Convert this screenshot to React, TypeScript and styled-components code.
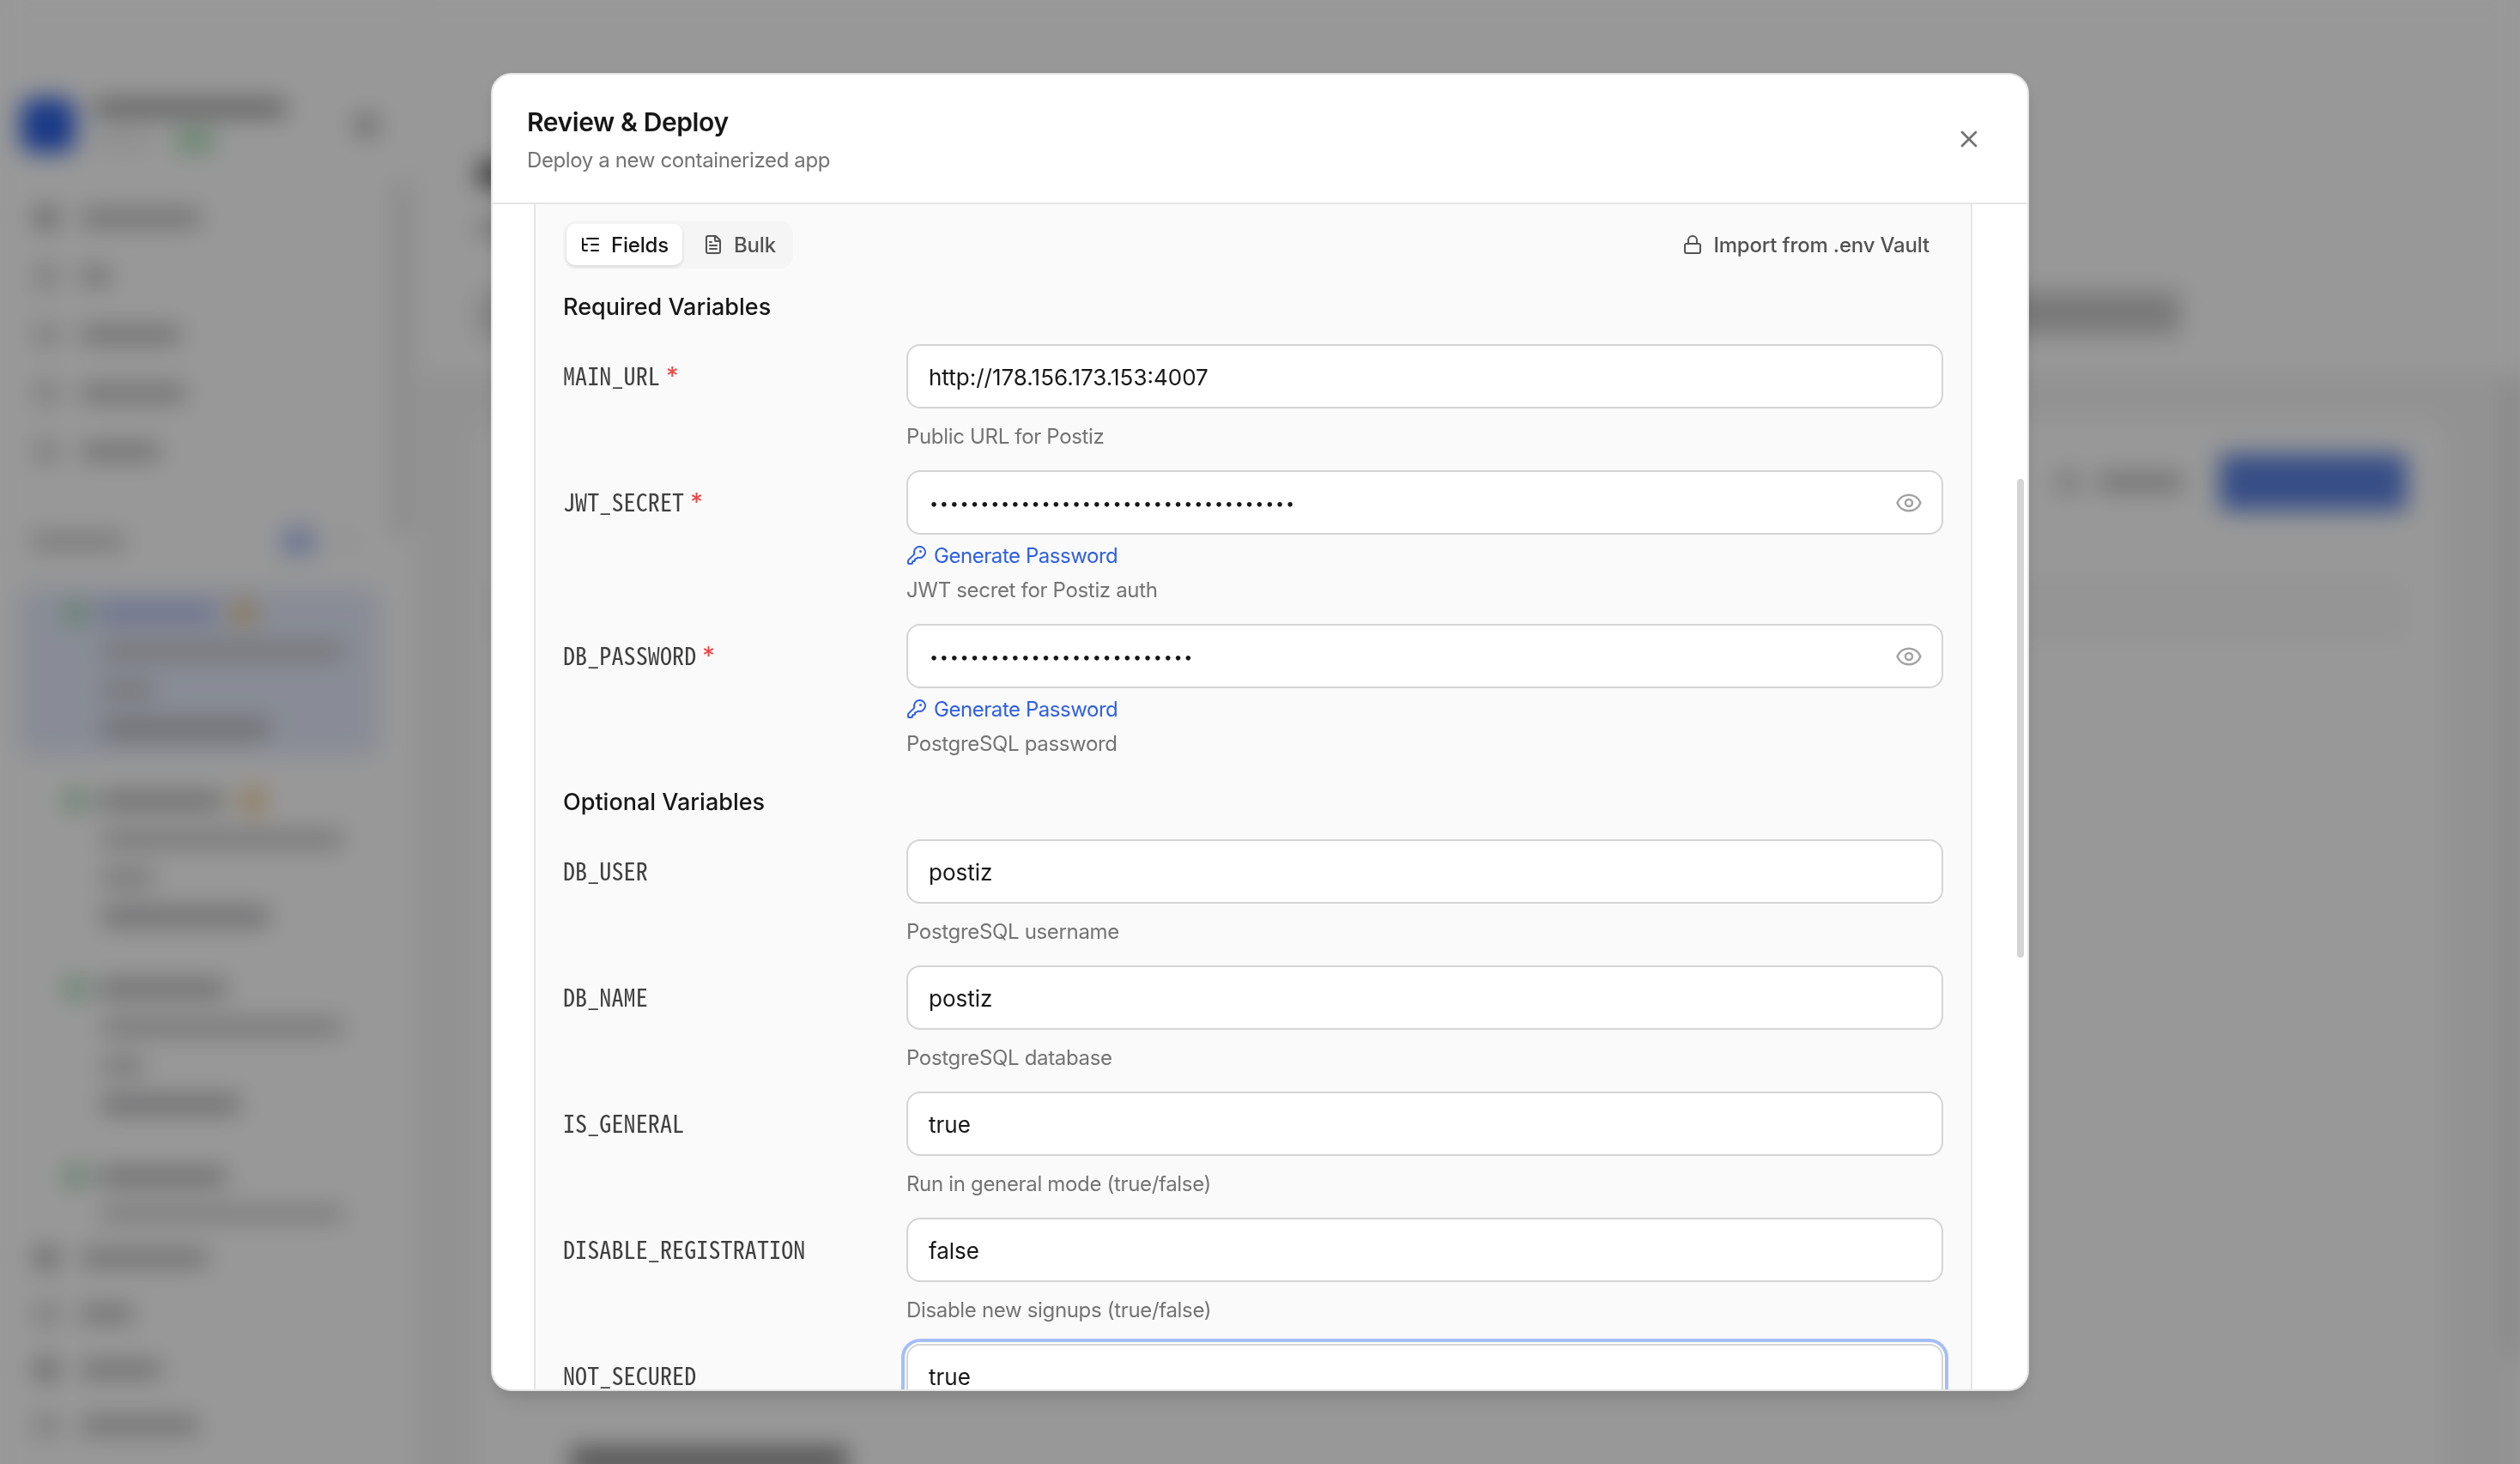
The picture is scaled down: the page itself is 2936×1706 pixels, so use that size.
import { Eye, FileText, KeyRound, ListTree, Lock, X } from "lucide-react";
import styled, { createGlobalStyle, css } from "styled-components";

const theme = {
  font: {
    sans: `Inter, "Liberation Sans", sans-serif`,
    mono: `"Noto Sans Mono CJK SC", "DejaVu Sans Mono", monospace`,
  },
  colors: {
    black: "#171717",
    label: "#404040",
    button: "#525252",
    muted: "#737373",
    icon: "#a3a3a3",
    border: "#e5e5e5",
    inputBorder: "#d4d4d4",
    panel: "#fafafa",
    blue: "#2f5fe3",
    red: "#ef4444",
  },
};

const GlobalStyle = createGlobalStyle`
  * {
    box-sizing: border-box;
  }

  body {
    margin: 0;
    background-color: #ffffff;
    font-family: ${theme.font.sans};
    color: ${theme.colors.black};
    -webkit-font-smoothing: antialiased;
    overflow: hidden;
  }
`;

/* Page behind the dialog */

const Viewport = styled.div`
  width: 2936px;
  height: 1706px;
  background-color: #fefefe;
  overflow: hidden;
`;

const Page = styled.div`
  width: 2936px;
  height: 1800px;
  display: flex;
  background-color: #fefefe;
  filter: blur(14px);
`;

const Sidebar = styled.aside`
  width: 488px;
  display: flex;
  border-right: 2px solid ${theme.colors.border};
`;

const SidebarContent = styled.div`
  width: 460px;
  padding-top: 114px;
  flex: none;
`;

const Rail = styled.div<{ $top: number; $height: number; $tone?: string }>`
  width: 14px;
  height: ${({ $height }) => $height}px;
  margin-top: ${({ $top }) => $top}px;
  border-radius: 7px;
  background-color: ${({ $tone }) => $tone ?? "#dddddd"};
`;

const Bar = styled.span<{
  $width: number;
  $height?: number;
  $tone?: string;
  $left?: number;
}>`
  flex: none;
  width: ${({ $width }) => $width}px;
  height: ${({ $height }) => $height ?? 20}px;
  margin-left: ${({ $left }) => $left ?? 0}px;
  border-radius: 6px;
  background-color: ${({ $tone }) => $tone ?? "#bababa"};
`;

const Brand = styled.div`
  height: 64px;
  padding-left: 24px;
  display: flex;
  align-items: center;
`;

const BrandLogo = styled.div`
  width: 64px;
  height: 64px;
  border-radius: 16px;
  background-color: #2c60e0;
`;

const BrandText = styled.div`
  width: 300px;
  margin-left: 20px;
  display: flex;
  flex-direction: column;
  gap: 16px;
`;

const BrandMeta = styled.div`
  display: flex;
  align-items: center;
`;

const Nav = styled.nav<{ $top: number }>`
  margin-top: ${({ $top }) => $top}px;
`;

const NavItem = styled.div<{ $height: number }>`
  height: ${({ $height }) => $height}px;
  padding-left: 40px;
  display: flex;
  align-items: center;
`;

const SectionRow = styled.div`
  height: 40px;
  margin-top: 51px;
  padding-left: 36px;
  display: flex;
  align-items: center;
`;

const ServerList = styled.div`
  height: 737px;
  margin-top: 34px;
  padding-left: 22px;
  display: flex;
  flex-direction: column;
  gap: 23px;
  overflow: hidden;
`;

const ServerCard = styled.div<{ $active?: boolean }>`
  flex: none;
  width: 420px;
  height: 196px;
  padding-top: 6px;
  border-radius: 16px;
  background-color: ${({ $active }) => ($active ? "#e4eafa" : "transparent")};
`;

const ServerLine = styled.div`
  height: 45px;
  padding-left: 96px;
  display: flex;
  align-items: center;
`;

const ServerName = styled(ServerLine)`
  padding-left: 54px;
`;

const Main = styled.main`
  flex: 1;
  display: flex;
  flex-direction: column;
`;

const MainHeader = styled.div`
  flex: none;
  height: 440px;
  padding: 188px 396px 0 68px;
  border-bottom: 2px solid ${theme.colors.border};
`;

const HeaderRow = styled.div<{ $height: number }>`
  height: ${({ $height }) => $height}px;
  display: flex;
  justify-content: space-between;
  align-items: flex-start;
`;

const MainBody = styled.div`
  flex: 1;
  min-height: 0;
  display: flex;
  justify-content: space-between;
  background-color: #f4f4f4;
`;

const Card = styled.div`
  width: 2290px;
  margin: 50px 0 0 68px;
  padding: 36px 42px 0 16px;
  border-radius: 24px;
  background-color: #fefefe;
`;

const CardActions = styled.div`
  height: 72px;
  display: flex;
  justify-content: flex-end;
  align-items: center;
`;

const CardNotice = styled.div`
  height: 76px;
  margin-top: 76px;
  background-color: #f8f8f8;
`;

const CardFooter = styled.div`
  margin-top: 936px;
  padding-left: 92px;
  display: flex;
`;

/* Dialog */

const Overlay = styled.div`
  position: fixed;
  inset: 0;
  display: flex;
  align-items: center;
  justify-content: center;
  background-color: rgba(0, 0, 0, 0.4);
`;

const Dialog = styled.div`
  width: 1792px;
  height: 1536px;
  display: flex;
  flex-direction: column;
  border: 2px solid ${theme.colors.border};
  border-radius: 24px;
  background-color: #ffffff;
  box-shadow:
    0 20px 30px -10px rgba(0, 0, 0, 0.1),
    0 4px 16px rgba(0, 0, 0, 0.08);
  overflow: hidden;
`;

const DialogHeader = styled.header`
  flex: none;
  height: 151px;
  padding: 35px 40px 32px;
  display: flex;
  align-items: center;
  justify-content: space-between;
  border-bottom: 2px solid ${theme.colors.border};
`;

const Title = styled.h2`
  margin: 0 0 7px;
  font-size: 30px;
  line-height: 40px;
  font-weight: 600;
  letter-spacing: -0.4px;
`;

const Subtitle = styled.p`
  margin: 0;
  font-size: 24px;
  line-height: 36px;
  letter-spacing: -0.38px;
  color: ${theme.colors.muted};
`;

const CloseButton = styled.button`
  width: 56px;
  height: 56px;
  padding: 0 0 2px;
  display: flex;
  align-items: center;
  justify-content: center;
  border: none;
  background-color: transparent;
  color: ${theme.colors.muted};
`;

const DialogBody = styled.div`
  flex: 1;
  min-height: 0;
  display: flex;
  overflow: hidden;
`;

const Panel = styled.section`
  width: 1676px;
  height: 1600px;
  margin-left: 48px;
  padding: 19px 32px 0;
  border: 2px solid ${theme.colors.border};
  border-width: 0 2px;
  background-color: ${theme.colors.panel};
`;

const ScrollThumb = styled.div`
  width: 8px;
  height: 558px;
  margin: 320px 4px 0 auto;
  border-radius: 4px;
  background-color: ${theme.colors.inputBorder};
`;

const Toolbar = styled.div`
  height: 56px;
  margin-bottom: 25px;
  display: flex;
  align-items: center;
  justify-content: space-between;
`;

const Tabs = styled.div`
  height: 56px;
  padding: 4px;
  display: flex;
  gap: 8px;
  border-radius: 16px;
  background-color: #f5f5f5;
`;

const ToolButton = styled.button<{ $active?: boolean }>`
  height: 48px;
  padding: 0 16px;
  display: flex;
  align-items: center;
  gap: 12px;
  border: none;
  border-radius: 10px;
  background-color: transparent;
  font-family: inherit;
  font-size: 24px;
  font-weight: 500;
  letter-spacing: -0.18px;
  color: ${theme.colors.button};

  ${({ $active }) =>
    $active &&
    css`
      background-color: #ffffff;
      color: ${theme.colors.black};
      box-shadow: 0 2px 4px rgba(0, 0, 0, 0.12);
    `}
`;

const GroupTitle = styled.h3<{ $spaced?: boolean }>`
  margin: ${({ $spaced }) => ($spaced ? 28 : 0)}px 0 23px;
  font-size: 27px;
  line-height: 40px;
  font-weight: 500;
`;

const Rows = styled.div`
  display: flex;
  flex-direction: column;
  gap: 19px;
`;

const Row = styled.div`
  display: grid;
  grid-template-columns: 400px 1fr;
`;

const Label = styled.label`
  height: 75px;
  padding-bottom: 3px;
  display: flex;
  align-items: center;
  font-family: ${theme.font.mono};
  font-size: 28px;
  line-height: 40px;
  letter-spacing: 0.12px;
  color: ${theme.colors.label};
`;

const Required = styled.span`
  margin-left: 7px;
  padding-top: 2px;
  font-family: ${theme.font.sans};
  font-size: 29px;
  color: ${theme.colors.red};
`;

const InputBox = styled.div<{ $focused?: boolean }>`
  height: 75px;
  padding: 0 22px 0 24px;
  display: flex;
  align-items: center;
  border: 2px solid ${theme.colors.inputBorder};
  border-radius: 16px;
  background-color: #ffffff;
  color: ${theme.colors.icon};
  box-shadow: ${({ $focused }) =>
    $focused ? "0 0 0 2px #ffffff, 0 0 0 6px #a4bef7" : "none"};
`;

const Input = styled.input<{ $secret?: boolean }>`
  flex: 1;
  min-width: 0;
  padding: 1px 0 0;
  border: none;
  outline: none;
  background-color: transparent;
  font-family: inherit;
  font-size: 26px;
  color: ${theme.colors.black};

  ${({ $secret }) =>
    $secret &&
    css`
      padding-left: 1px;
      font-size: 18px;
      letter-spacing: 1.73px;
    `}
`;

const GenerateButton = styled.button`
  height: 32px;
  margin-top: 8px;
  padding: 0;
  display: flex;
  align-items: center;
  gap: 8px;
  border: none;
  background-color: transparent;
  font-family: inherit;
  font-size: 24px;
  letter-spacing: -0.45px;
  color: ${theme.colors.blue};
`;

const Help = styled.p<{ $tight?: boolean }>`
  margin: ${({ $tight }) => ($tight ? 5 : 13)}px 0 0;
  font-size: 24px;
  line-height: 40px;
  letter-spacing: -0.33px;
  color: ${theme.colors.muted};
`;

interface IVariable {
  name: string;
  value: string;
  help: string;
  required?: boolean;
  secret?: boolean;
  focused?: boolean;
}

const requiredVariables: IVariable[] = [
  {
    name: "MAIN_URL",
    value: "http://178.156.173.153:4007",
    help: "Public URL for Postiz",
    required: true,
  },
  {
    name: "JWT_SECRET",
    value: "•".repeat(36),
    help: "JWT secret for Postiz auth",
    required: true,
    secret: true,
  },
  {
    name: "DB_PASSWORD",
    value: "•".repeat(26),
    help: "PostgreSQL password",
    required: true,
    secret: true,
  },
];

const optionalVariables: IVariable[] = [
  { name: "DB_USER", value: "postiz", help: "PostgreSQL username" },
  { name: "DB_NAME", value: "postiz", help: "PostgreSQL database" },
  {
    name: "IS_GENERAL",
    value: "true",
    help: "Run in general mode (true/false)",
  },
  {
    name: "DISABLE_REGISTRATION",
    value: "false",
    help: "Disable new signups (true/false)",
  },
  { name: "NOT_SECURED", value: "true", help: "", focused: true },
];

const navWidths = [140, 35, 117, 123, 93];
const footerWidths = [148, 62, 95, 138];

const servers = [
  { name: 138, lines: [282, 62, 196], badge: true, active: true },
  { name: 148, lines: [282, 62, 196], badge: true },
  { name: 150, lines: [282, 50, 162] },
  { name: 150, lines: [282, 50, 162] },
];

const VariableRow = ({
  name,
  value,
  help,
  required,
  secret,
  focused,
}: IVariable) => (
  <Row>
    <Label htmlFor={name}>
      {name}
      {required && <Required>*</Required>}
    </Label>
    <div>
      <InputBox $focused={focused}>
        <Input
          id={name}
          defaultValue={value}
          spellCheck={false}
          $secret={secret}
        />
        {secret && <Eye size={32} strokeWidth={1.9} />}
      </InputBox>
      {secret && (
        <GenerateButton>
          <KeyRound size={24} />
          Generate Password
        </GenerateButton>
      )}
      {help && <Help $tight={secret}>{help}</Help>}
    </div>
  </Row>
);

const Backdrop = () => (
  <Viewport aria-hidden>
    <Page>
      <Sidebar>
        <SidebarContent>
          <Brand>
            <BrandLogo />
            <BrandText>
              <Bar $width={226} $tone="#a0a0a0" />
              <BrandMeta>
                <Bar $width={70} $tone="#ececec" />
                <Bar $width={46} $height={24} $left={26} $tone="#aadcb8" />
              </BrandMeta>
            </BrandText>
            <Bar $width={26} $height={26} $left={6} $tone="#b4b4b4" />
          </Brand>
          <Nav $top={42}>
            {navWidths.map((width, i) => (
              <NavItem key={i} $height={68}>
                <Bar
                  $width={28}
                  $height={26}
                  $tone={i ? "#d0d0d0" : "#b0b0b0"}
                />
                <Bar $width={width} $left={26} />
              </NavItem>
            ))}
          </Nav>
          <SectionRow>
            <Bar $width={110} $tone="#cacaca" />
            <Bar $width={40} $height={32} $left={182} $tone="#b4c4f4" />
            <Bar $width={14} $height={14} $left={30} $tone="#dcdcdc" />
          </SectionRow>
          <ServerList>
            {servers.map((server, i) => (
              <ServerCard key={i} $active={server.active}>
                <ServerName>
                  <Bar $width={24} $height={22} $tone="#94d0a6" />
                  <Bar
                    $width={server.name}
                    $left={14}
                    $tone={server.active ? "#b0b9ea" : "#b4b4b4"}
                  />
                  {server.badge && (
                    <Bar $width={26} $height={26} $left={20} $tone="#ecc484" />
                  )}
                </ServerName>
                {server.lines.map((width, line) => (
                  <ServerLine key={line}>
                    <Bar
                      $width={width}
                      $height={line === 2 ? 22 : 18}
                      $tone={line === 2 ? "#b8b8bc" : "#c0c0c2"}
                    />
                  </ServerLine>
                ))}
              </ServerCard>
            ))}
          </ServerList>
          <Nav $top={11}>
            {footerWidths.map((width, i) => (
              <NavItem key={i} $height={65}>
                <Bar
                  $width={28}
                  $height={26}
                  $tone={i % 2 ? "#d0d0d0" : "#b0b0b0"}
                />
                <Bar $width={width} $left={26} />
              </NavItem>
            ))}
          </Nav>
        </SidebarContent>
        <Rail $top={212} $height={414} />
      </Sidebar>
      <Main>
        <MainHeader>
          <HeaderRow $height={68}>
            <Bar $width={200} $height={30} $tone="#6a6a6a" />
          </HeaderRow>
          <HeaderRow $height={84}>
            <Bar $width={200} $height={20} $tone="#c4c4c4" />
          </HeaderRow>
          <HeaderRow $height={54}>
            <Bar $width={200} $height={54} $tone="#dddddd" />
            <Bar $width={300} $height={50} $tone="#cacaca" />
          </HeaderRow>
        </MainHeader>
        <MainBody>
          <Card>
            <CardActions>
              <Bar $width={28} $height={24} $tone="#c8c8c8" />
              <Bar $width={100} $left={20} />
              <Bar $width={218} $height={66} $left={42} $tone="#5c82e0" />
            </CardActions>
            <CardNotice />
            <CardFooter>
              <Bar $width={324} $height={32} $tone="#8e8e8e" />
            </CardFooter>
          </Card>
          <Rail $top={0} $height={1140} $tone="#d8d8d8" />
        </MainBody>
      </Main>
    </Page>
  </Viewport>
);

const App = () => (
  <>
    <GlobalStyle />
    <Backdrop />
    <Overlay>
      <Dialog role="dialog">
        <DialogHeader>
          <div>
            <Title>Review &amp; Deploy</Title>
            <Subtitle>Deploy a new containerized app</Subtitle>
          </div>
          <CloseButton aria-label="Close">
            <X size={32} />
          </CloseButton>
        </DialogHeader>
        <DialogBody>
          <Panel>
            <Toolbar>
              <Tabs>
                <ToolButton $active>
                  <ListTree size={24} />
                  Fields
                </ToolButton>
                <ToolButton>
                  <FileText size={24} />
                  Bulk
                </ToolButton>
              </Tabs>
              <ToolButton>
                <Lock size={24} />
                Import from .env Vault
              </ToolButton>
            </Toolbar>
            <GroupTitle>Required Variables</GroupTitle>
            <Rows>
              {requiredVariables.map((variable) => (
                <VariableRow key={variable.name} {...variable} />
              ))}
            </Rows>
            <GroupTitle $spaced>Optional Variables</GroupTitle>
            <Rows>
              {optionalVariables.map((variable) => (
                <VariableRow key={variable.name} {...variable} />
              ))}
            </Rows>
          </Panel>
          <ScrollThumb />
        </DialogBody>
      </Dialog>
    </Overlay>
  </>
);

export default App;
